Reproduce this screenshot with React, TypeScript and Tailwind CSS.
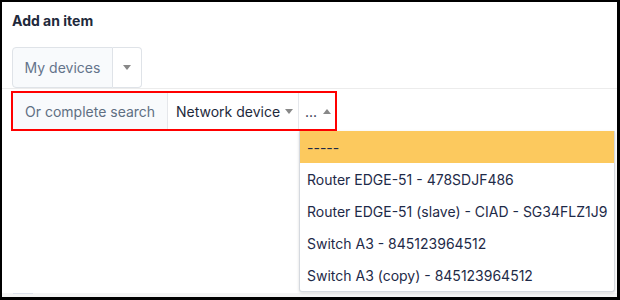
import React from "react";

const Down = ({ className = "" }: { className?: string }) => (
  <svg width="8" height="5" viewBox="0 0 8 5" className={className}>
    <path d="M0 0 L8 0 L4 5 Z" fill="#888" />
  </svg>
);
const Up = ({ className = "" }: { className?: string }) => (
  <svg width="8" height="5" viewBox="0 0 8 5" className={className}>
    <path d="M0 5 L8 5 L4 0 Z" fill="#888" />
  </svg>
);

export default function App() {
  const items = [
    "Router EDGE-51 - 478SDJF486",
    "Router EDGE-51 (slave) - CIAD - SG34FLZ1J9",
    "Switch A3 - 845123964512",
    "Switch A3 (copy) - 845123964512",
  ];
  return (
    <div
      className="w-[620px] h-[300px] bg-black pl-[2px] pt-[2px] pr-[3px] pb-[3px]"
      style={{ fontFamily: "Inter, 'Noto Sans', sans-serif" }}
    >
      <div className="relative w-full h-full bg-white flex flex-col overflow-hidden">
        <div className="pl-[10px] pt-[10px] text-[14px] leading-[18px] font-bold text-[#1e293b]">
          Add an item
        </div>
        <div className="flex border-b border-[#ececec] pl-[10px] mt-[17px]">
          <div className="flex h-[41px]">
            <div className="w-[101px] flex items-center justify-center bg-[#f8fafc] border border-[#dfe3e8] rounded-l-[4px] text-[14px] text-[#64748b]">
              My devices
            </div>
            <div className="w-[29px] flex items-center justify-center bg-white border border-l-0 border-[#dfe3e8] rounded-r-[4px]">
              <Down />
            </div>
          </div>
        </div>
        <div className="pl-[9px] pt-[2px]">
          <div className="flex w-[326px] h-[40px] border-2 border-[#ff0000]">
            <div className="w-[154px] flex items-center pl-[12px] bg-[#f8fafc] text-[14px] text-[#5f6f82]">
              Or complete search
            </div>
            <div className="w-[131px] flex items-center pl-[8px] bg-white border-l border-[#e5e7eb] text-[14px] text-[#1e293b]">
              Network device
              <Down className="ml-[5px]" />
            </div>
            <div className="flex-1 flex items-center pl-[6px] bg-white border-l border-[#e5e7eb] text-[14px] text-[#1e293b]">
              ...
              <Up className="ml-[6px]" />
            </div>
          </div>
        </div>
        <div className="flex-1" />
        <div className="h-[4px] bg-[#f4f4f4] flex">
          <div className="ml-[11px] w-[20px] h-[1px] bg-[#dde1ea]" />
        </div>
        <div className="absolute left-[297px] top-[129px] w-[316px] bg-white border border-[#d5d9df] border-t-0 rounded-b-[3px] shadow-[0_1px_3px_rgba(0,0,0,0.15)] text-[14px] text-[#1e2a48]">
          <div className="h-[32px] flex items-center pl-[7px] bg-[#fcc95e]">-----</div>
          {items.map((t) => (
            <div key={t} className="h-[32px] flex items-center pl-[7px]">
              {t}
            </div>
          ))}
        </div>
      </div>
    </div>
  );
}
